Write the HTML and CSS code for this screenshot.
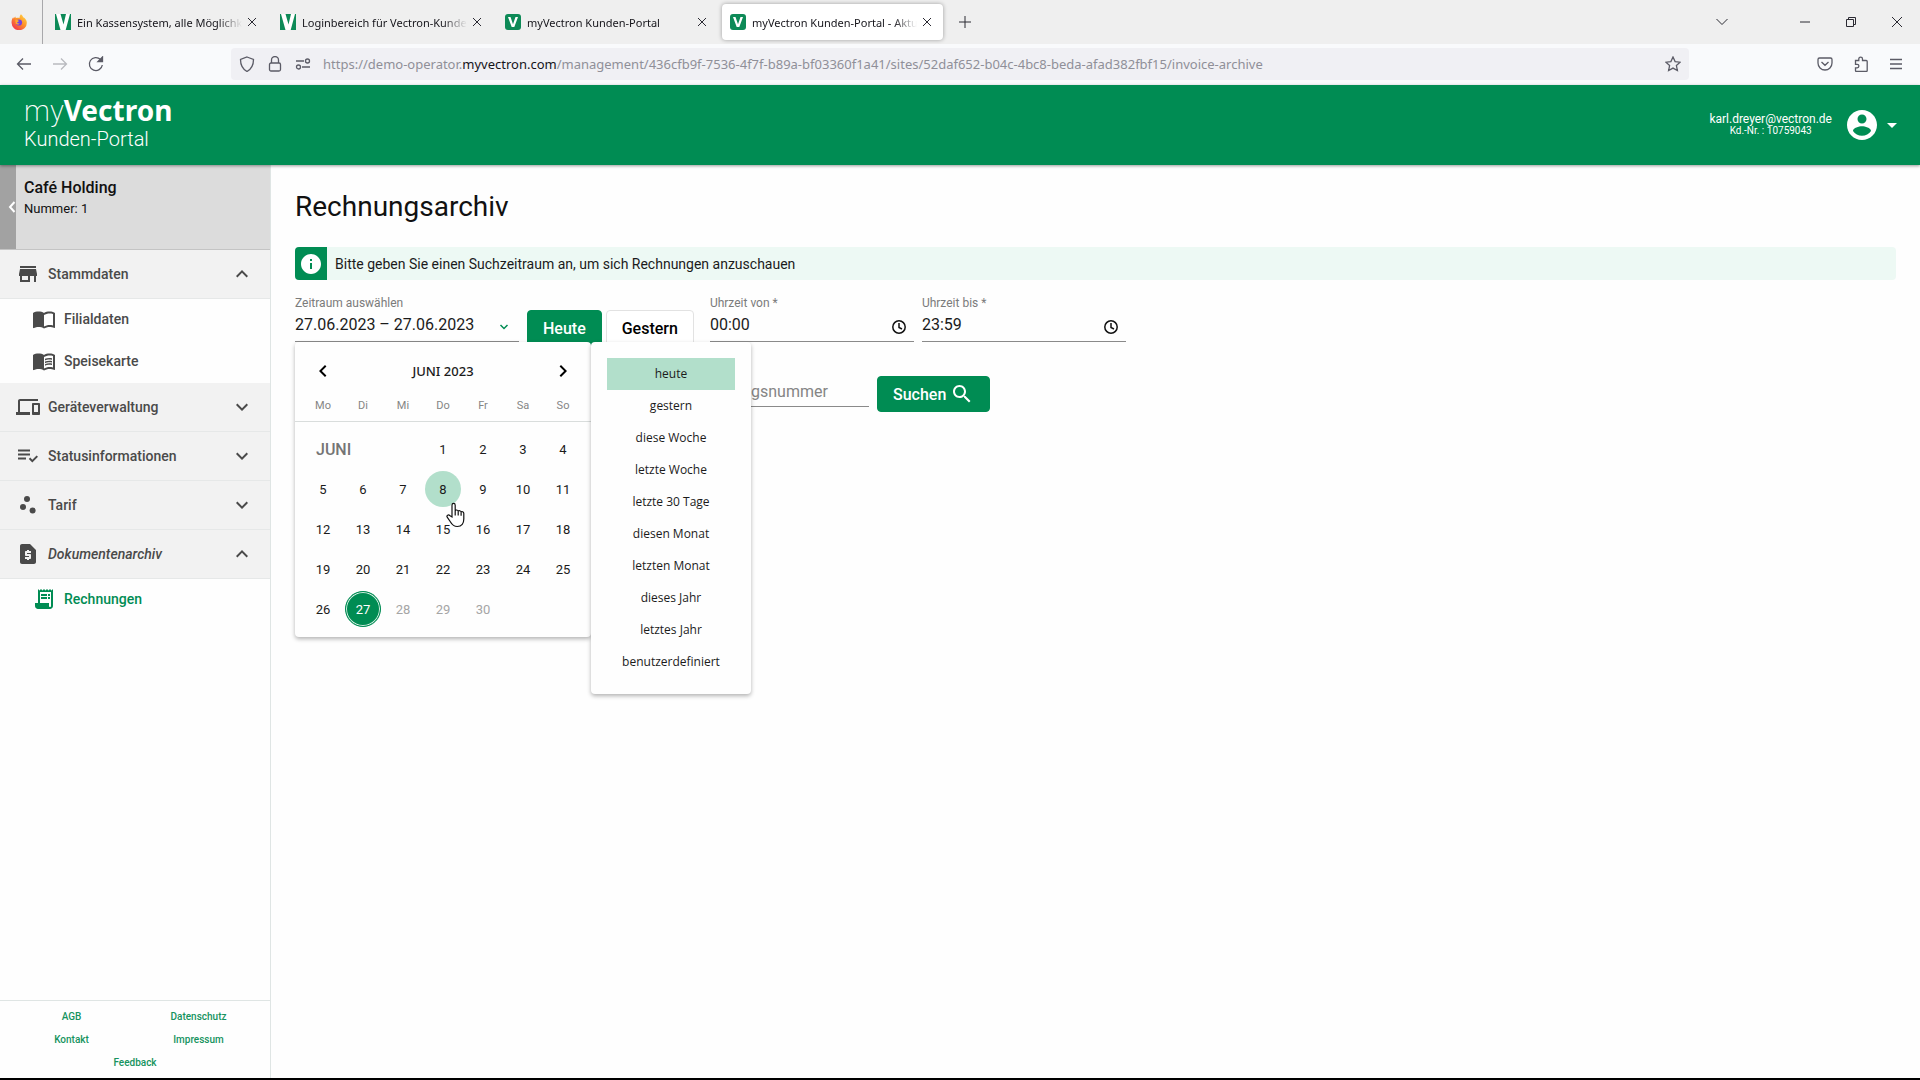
FILE: index.html
```html
<!DOCTYPE html>
<html lang="de">
<head>
    <meta charset="UTF-8">
    <meta name="viewport" content="width=device-width, initial-scale=1.0">
    <title>myVectron Kunden-Portal</title>
    <link rel="stylesheet" href="styles.css">
</head>
<body>
    <!-- Browser tabs -->
    <div class="tab-bar">
        <button class="pinned-tab" type="button" aria-label="Firefox">
            <svg width="16" height="16" viewBox="0 0 16 16">
                <defs>
                    <linearGradient id="flame" x1="1" y1="0" x2="0.2" y2="1">
                        <stop offset="0" stop-color="#ffe34a"/>
                        <stop offset="0.5" stop-color="#ff9128"/>
                        <stop offset="1" stop-color="#f0304f"/>
                    </linearGradient>
                </defs>
                <path fill="url(#flame)" d="M10 .3c1.200 1 1.900 1.900 2.200 2.900 1 .3 3.600 2.200 3.600 5.500a7.500 7.200 0 0 1-15.200.4C.4 6.700 1 4.600 2.200 3.200l.5 1.300 1.500-1.900.7 1.600c1.100-.6 3-.2 3.600-.2C8.600 2.600 9 1.200 10 .3z"/>
                <circle cx="8" cy="8.500" r="3.100" fill="#7542e0"/>
                <path fill="#ffab2e" d="M4.300 6c1.800-.5 3 .2 3.600 1.200L6 8.500c.5 1 1.600 1.200 2.700.8-.6 1.600-3 1.700-4 .2z"/>
            </svg>
        </button>
        <div class="tab">
            <svg class="favicon" width="16" height="16" viewBox="0 0 16 16"><path fill="#0d8a57" d="M0 0h16v16H0z"/><path fill="#fff" d="M1 0h4.500l3 10.500L11 0h4L10.700 16H5.500z"/></svg>
            <span class="tab-title">Ein Kassensystem, alle Möglichkeiten</span>
            <button class="tab-close" type="button" aria-label="Tab schließen"><svg width="10" height="10" viewBox="0 0 10 10"><path d="M1 1l8 8M9 1l-8 8"/></svg></button>
        </div>
        <div class="tab">
            <svg class="favicon" width="16" height="16" viewBox="0 0 16 16"><path fill="#0d8a57" d="M0 0h16v16H0z"/><path fill="#fff" d="M1 0h4.500l3 10.500L11 0h4L10.700 16H5.500z"/></svg>
            <span class="tab-title">Loginbereich für Vectron-Kunden</span>
            <button class="tab-close" type="button" aria-label="Tab schließen"><svg width="10" height="10" viewBox="0 0 10 10"><path d="M1 1l8 8M9 1l-8 8"/></svg></button>
        </div>
        <div class="tab">
            <svg class="favicon" width="16" height="16" viewBox="0 0 16 16"><rect width="16" height="16" rx="3" fill="#0d8a57"/><path fill="#fff" d="M3 3h2.500L8 10.200 10.500 3H13L9.300 13H6.700z"/></svg>
            <span class="tab-title">myVectron Kunden-Portal</span>
            <button class="tab-close" type="button" aria-label="Tab schließen"><svg width="10" height="10" viewBox="0 0 10 10"><path d="M1 1l8 8M9 1l-8 8"/></svg></button>
        </div>
        <div class="tab active">
            <svg class="favicon" width="16" height="16" viewBox="0 0 16 16"><rect width="16" height="16" rx="3" fill="#0d8a57"/><path fill="#fff" d="M3 3h2.500L8 10.200 10.500 3H13L9.300 13H6.700z"/></svg>
            <span class="tab-title">myVectron Kunden-Portal - Aktuell</span>
            <button class="tab-close" type="button" aria-label="Tab schließen"><svg width="10" height="10" viewBox="0 0 10 10"><path d="M1 1l8 8M9 1l-8 8"/></svg></button>
        </div>
        <button class="new-tab" type="button" aria-label="Neuer Tab"><svg width="12" height="12" viewBox="0 0 12 12"><path d="M6 0v12M0 6h12"/></svg></button>
        <div class="window-buttons">
            <button type="button" aria-label="Alle Tabs"><svg width="12" height="12" viewBox="0 0 12 12"><path d="M.5 3L6 8.500 11.500 3"/></svg></button>
            <button type="button" aria-label="Minimieren"><svg width="10" height="10" viewBox="0 0 10 10"><path d="M0 5h10"/></svg></button>
            <button type="button" aria-label="Verkleinern"><svg width="10" height="10" viewBox="0 0 10 10"><path d="M.5 2.500h7v7h-7zM2.500 2.500v-2h7v7h-2"/></svg></button>
            <button type="button" aria-label="Schließen"><svg width="10" height="10" viewBox="0 0 10 10"><path d="M0 0l10 10M10 0L0 10"/></svg></button>
        </div>
    </div>

    <!-- Address bar -->
    <div class="nav-bar">
        <div class="nav-buttons">
            <button type="button" aria-label="Zurück"><svg width="16" height="16" viewBox="0 0 16 16"><path d="M15 8H1.500M7 2.500L1.500 8 7 13.500"/></svg></button>
            <button type="button" aria-label="Vor" disabled><svg width="16" height="16" viewBox="0 0 16 16"><path d="M1 8h13.500M9 2.500L14.500 8 9 13.500"/></svg></button>
            <button type="button" aria-label="Neu laden"><svg width="16" height="16" viewBox="0 0 16 16"><path d="M14.300 9A6.500 6.500 0 1 1 12.500 3.500L14 5"/><path d="M14.500 1v4.500H10z" fill="#5b5b66"/></svg></button>
        </div>
        <div class="url-bar">
            <svg width="16" height="16" viewBox="0 0 16 16"><path d="M8 1l6.500 2.500c0 5.500-2 9.500-6.500 12-4.500-2.500-6.500-6.500-6.500-12z"/></svg>
            <svg width="16" height="16" viewBox="0 0 16 16"><rect x="2.500" y="7" width="11" height="8" rx="1.500"/><path d="M4.500 7V4a3.500 3.500 0 0 1 7 0v3"/></svg>
            <svg width="16" height="16" viewBox="0 0 16 16"><path d="M1 5h8M7 11h8"/><circle cx="12.500" cy="5" r="2"/><circle cx="3.500" cy="11" r="2"/></svg>
            <span class="url">https://demo-operator.<b>myvectron.com</b>/management/436cfb9f-7536-4f7f-b89a-bf03360f1a41/sites/52daf652-b04c-4bc8-beda-afad382fbf15/invoice-archive</span>
            <svg width="16" height="16" viewBox="0 0 16 16"><path d="M8 1l2.100 4.600 5 .6-3.700 3.400 1 5L8 12.100l-4.400 2.500 1-5L.9 6.200l5-.6z"/></svg>
        </div>
        <div class="tool-buttons">
            <button type="button" aria-label="Pocket"><svg width="16" height="16" viewBox="0 0 16 16"><path d="M2.500 2h11a1.500 1.500 0 0 1 1.500 1.500V7A7 7 0 0 1 1 7V3.500A1.500 1.500 0 0 1 2.500 2zM4.500 6L8 9.300 11.500 6"/></svg></button>
            <button type="button" aria-label="Erweiterungen"><svg width="16" height="16" viewBox="0 0 16 16"><path d="M2.500 4.500h3.300V3a1.800 1.800 0 0 1 3.700 0v1.500h3.700a1 1 0 0 1 1 1v9a1 1 0 0 1-1 1h-9.700a1 1 0 0 1-1-1v-2.700h1.700a1.600 1.600 0 0 0 0-3.400H2.500z"/></svg></button>
            <button type="button" aria-label="Menü"><svg width="14" height="14" viewBox="0 0 14 14"><path d="M1 2.500h12M1 7h12M1 11.500h12"/></svg></button>
        </div>
    </div>

    <header class="page-header">
        <div class="logo">
            <div class="logo-name">my<b>Vectron</b></div>
            <div class="logo-sub">Kunden-Portal</div>
        </div>
        <div class="account">
            <div class="account-text">
                <div class="mail">karl.dreyer@vectron.de</div>
                <div class="customer">Kd.-Nr. : 10759043</div>
            </div>
            <button class="account-button" type="button" aria-label="Konto">
                <svg width="36" height="36" viewBox="0 0 24 24"><path d="M12 2C6.480 2 2 6.480 2 12s4.480 10 10 10 10-4.480 10-10S17.520 2 12 2zm0 3c1.660 0 3 1.340 3 3s-1.340 3-3 3-3-1.340-3-3 1.340-3 3-3zm0 14.200c-2.500 0-4.710-1.280-6-3.220.03-1.990 4-3.080 6-3.080 1.990 0 5.970 1.090 6 3.080-1.290 1.940-3.500 3.220-6 3.220z"/></svg>
                <svg width="24" height="24" viewBox="0 0 24 24"><path d="M7 10l5 5 5-5z"/></svg>
            </button>
        </div>
    </header>

    <div class="content">
        <!-- Sidebar -->
        <aside class="sidebar">
            <div class="site">
                <button class="site-back" type="button" aria-label="Zurück"><svg width="8" height="12" viewBox="0 0 8 12"><path d="M6.500 1L2 6l4.500 5"/></svg></button>
                <div class="site-text">
                    <div class="site-name">Café Holding</div>
                    <div class="site-number">Nummer: 1</div>
                </div>
            </div>
            <nav class="menu">
                <button class="menu-item" type="button">
                    <svg class="icon" viewBox="0 0 24 24"><path d="M20 4H4v2h16V4zm1 10v-2l-1-5H4l-1 5v2h1v6h10v-6h4v6h2v-6h1zm-9 4H6v-4h6v4z"/></svg>
                    <span>Stammdaten</span>
                    <svg class="icon" viewBox="0 0 24 24"><path d="M12 8l-6 6 1.410 1.410L12 10.830l4.590 4.580L18 14z"/></svg>
                </button>
                <div class="submenu">
                    <a href="#"><svg class="icon" viewBox="0 0 24 24"><path d="M21 5c-1.110-.35-2.330-.5-3.500-.5-1.950 0-4.050.4-5.500 1.500-1.450-1.100-3.550-1.500-5.500-1.500S2.450 4.900 1 6v14.650c0 .25.25.5.5.5.1 0 .15-.05.25-.05C3.100 20.450 5.050 20 6.500 20c1.950 0 4.050.4 5.500 1.500 1.350-.85 3.800-1.500 5.500-1.500 1.650 0 3.350.3 4.750 1.050.1.050.15.050.25.050.25 0 .5-.25.5-.5V6c-.6-.45-1.250-.75-2-1zm0 13.500c-1.100-.35-2.300-.5-3.500-.5-1.700 0-4.150.65-5.500 1.500V8c1.350-.85 3.800-1.500 5.500-1.500 1.200 0 2.400.15 3.500.5v11.500z"/></svg>Filialdaten</a>
                    <a href="#"><svg class="icon" viewBox="0 0 24 24"><path d="M21 5c-1.110-.35-2.330-.5-3.500-.5-1.950 0-4.050.4-5.500 1.500-1.450-1.100-3.550-1.500-5.500-1.500S2.450 4.900 1 6v14.650c0 .25.25.5.5.5.1 0 .15-.05.25-.05C3.100 20.450 5.050 20 6.500 20c1.950 0 4.050.4 5.500 1.500 1.350-.85 3.800-1.500 5.500-1.500 1.650 0 3.350.3 4.750 1.050.1.050.15.050.25.050.25 0 .5-.25.5-.5V6c-.6-.45-1.250-.75-2-1zm0 13.500c-1.100-.35-2.300-.5-3.500-.5-1.700 0-4.150.65-5.500 1.500V8c1.350-.85 3.800-1.500 5.500-1.500 1.200 0 2.400.15 3.500.5v11.500z"/><path d="M17.500 10.500c.88 0 1.730.09 2.500.26V9.240c-.79-.15-1.640-.24-2.500-.24-1.700 0-3.240.29-4.500.83v1.660c1.130-.64 2.700-.99 4.500-.99zM13 12.490v1.660c1.130-.64 2.700-.99 4.500-.99.88 0 1.730.09 2.500.26V11.900c-.79-.15-1.640-.24-2.500-.24-1.700 0-3.240.3-4.500.83zM17.500 14.330c-1.700 0-3.240.29-4.500.83v1.660c1.130-.64 2.700-.99 4.500-.99.88 0 1.730.09 2.500.26v-1.520c-.79-.16-1.640-.24-2.500-.24z"/></svg>Speisekarte</a>
                </div>
                <button class="menu-item" type="button">
                    <svg class="icon" viewBox="0 0 24 24"><path d="M4 6h18V4H4c-1.100 0-2 .9-2 2v11H0v3h14v-3H4V6zm19 2h-6c-.55 0-1 .45-1 1v10c0 .55.45 1 1 1h6c.55 0 1-.45 1-1V9c0-.55-.45-1-1-1zm-1 9h-4v-7h4v7z"/></svg>
                    <span>Geräteverwaltung</span>
                    <svg class="icon" viewBox="0 0 24 24"><path d="M16.590 8.590L12 13.170 7.410 8.590 6 10l6 6 6-6z"/></svg>
                </button>
                <button class="menu-item" type="button">
                    <svg class="icon" viewBox="0 0 24 24"><path d="M2 9.500h12v2H2zm0-4h12v2H2zm0 8h8v2H2zm18.590-2.070l-4.250 4.240-2.120-2.120-1.410 1.410L16.340 18.500 22 12.840z"/></svg>
                    <span>Statusinformationen</span>
                    <svg class="icon" viewBox="0 0 24 24"><path d="M16.590 8.590L12 13.170 7.410 8.590 6 10l6 6 6-6z"/></svg>
                </button>
                <button class="menu-item" type="button">
                    <svg class="icon" viewBox="0 0 24 24"><circle cx="7" cy="14" r="3"/><circle cx="11" cy="6" r="3"/><circle cx="16.600" cy="17.600" r="3"/></svg>
                    <span>Tarif</span>
                    <svg class="icon" viewBox="0 0 24 24"><path d="M16.590 8.590L12 13.170 7.410 8.590 6 10l6 6 6-6z"/></svg>
                </button>
                <button class="menu-item current" type="button">
                    <svg class="icon" viewBox="0 0 24 24"><path d="M14 2H6c-1.100 0-1.990.9-1.990 2L4 20c0 1.100.89 2 1.990 2H18c1.100 0 2-.9 2-2V8l-6-6zm1 9h-4v1h3c.55 0 1 .45 1 1v3c0 .55-.45 1-1 1h-1v1h-2v-1H9v-2h4v-1h-3c-.55 0-1-.45-1-1v-3c0-.55.45-1 1-1h1V8h2v1h2v2z"/></svg>
                    <span>Dokumentenarchiv</span>
                    <svg class="icon" viewBox="0 0 24 24"><path d="M12 8l-6 6 1.410 1.410L12 10.830l4.590 4.580L18 14z"/></svg>
                </button>
                <div class="submenu">
                    <a class="selected" href="#"><svg class="icon" viewBox="0 0 24 24"><path d="M19.500 3.500L18 2l-1.500 1.500L15 2l-1.500 1.500L12 2l-1.500 1.500L9 2 7.500 3.500 6 2v14H3v3c0 1.660 1.340 3 3 3h12c1.660 0 3-1.340 3-3V2l-1.500 1.500zM19 19c0 .55-.45 1-1 1s-1-.45-1-1v-3H8V5h11v14z"/><path d="M9 7h6v2H9zM16 7h2v2h-2zM9 10h6v2H9zM16 10h2v2h-2z"/></svg>Rechnungen</a>
                </div>
            </nav>
            <footer class="links">
                <a href="#">AGB</a>
                <a href="#">Datenschutz</a>
                <a href="#">Kontakt</a>
                <a href="#">Impressum</a>
                <a class="wide" href="#">Feedback</a>
            </footer>
        </aside>

        <main class="main">
            <h1>Rechnungsarchiv</h1>
            <div class="info">
                <span class="info-icon"><svg width="24" height="24" viewBox="0 0 24 24"><path d="M12 2C6.480 2 2 6.480 2 12s4.480 10 10 10 10-4.480 10-10S17.520 2 12 2zm1 15h-2v-6h2v6zm0-8h-2V7h2v2z"/></svg></span>
                <span>Bitte geben Sie einen Suchzeitraum an, um sich Rechnungen anzuschauen</span>
            </div>

            <form>
                <div class="form-row">
                    <div class="field range">
                        <label for="range">Zeitraum auswählen</label>
                        <div class="field-box">
                            <input type="text" id="range" value="27.06.2023 – 27.06.2023" readonly>
                            <svg class="range-arrow" width="10" height="10" viewBox="0 0 10 10"><path d="M1.500 3L5 6.500 8.500 3"/></svg>
                        </div>

                        <!-- Date picker -->
                        <div class="picker">
                            <div class="calendar">
                                <div class="calendar-head">
                                    <button type="button" aria-label="Voriger Monat"><svg width="24" height="24" viewBox="0 0 24 24"><path d="M15.410 7.410L14 6l-6 6 6 6 1.410-1.410L10.830 12z"/></svg></button>
                                    <span>JUNI 2023</span>
                                    <button type="button" aria-label="Nächster Monat"><svg width="24" height="24" viewBox="0 0 24 24"><path d="M10 6L8.590 7.410 13.170 12l-4.580 4.590L10 18l6-6z"/></svg></button>
                                </div>
                                <table>
                                    <thead>
                                        <tr><th>Mo</th><th>Di</th><th>Mi</th><th>Do</th><th>Fr</th><th>Sa</th><th>So</th></tr>
                                    </thead>
                                    <tbody>
                                        <tr><td class="month" colspan="3">JUNI</td><td><button type="button">1</button></td><td><button type="button">2</button></td><td><button type="button">3</button></td><td><button type="button">4</button></td></tr>
                                        <tr><td><button type="button">5</button></td><td><button type="button">6</button></td><td><button type="button">7</button></td><td class="pointed"><button class="hovered" type="button">8</button><svg class="hand" width="20" height="26" viewBox="0 0 20 26"><path d="M7 15V3.200C7 .8 10.200.8 10.200 3.200V9c.3-1.500 3-1.300 3 .5.4-1.300 2.900-1 2.900.7.5-1 2.700-.6 2.700 1.300v5.500c0 4.500-2 7.500-6.500 7.500-4 0-5.300-1.800-6.800-4.500l-3.300-4.800c-1-1.700 1.300-2.900 2.500-1.700z"/><path d="M10.200 9v4.500M13.200 9.500v4M16.100 10.300v3.500"/></svg></td><td><button type="button">9</button></td><td><button type="button">10</button></td><td><button type="button">11</button></td></tr>
                                        <tr><td><button type="button">12</button></td><td><button type="button">13</button></td><td><button type="button">14</button></td><td><button type="button">15</button></td><td><button type="button">16</button></td><td><button type="button">17</button></td><td><button type="button">18</button></td></tr>
                                        <tr><td><button type="button">19</button></td><td><button type="button">20</button></td><td><button type="button">21</button></td><td><button type="button">22</button></td><td><button type="button">23</button></td><td><button type="button">24</button></td><td><button type="button">25</button></td></tr>
                                        <tr><td><button type="button">26</button></td><td><button class="chosen" type="button">27</button></td><td><button type="button" disabled>28</button></td><td><button type="button" disabled>29</button></td><td><button type="button" disabled>30</button></td><td></td><td></td></tr>
                                    </tbody>
                                </table>
                            </div>
                            <div class="presets">
                                <button class="active" type="button">heute</button>
                                <button type="button">gestern</button>
                                <button type="button">diese Woche</button>
                                <button type="button">letzte Woche</button>
                                <button type="button">letzte 30 Tage</button>
                                <button type="button">diesen Monat</button>
                                <button type="button">letzten Monat</button>
                                <button type="button">dieses Jahr</button>
                                <button type="button">letztes Jahr</button>
                                <button type="button">benutzerdefiniert</button>
                            </div>
                        </div>
                    </div>
                    <div class="day-buttons">
                        <button class="btn btn-green" type="button">Heute</button>
                        <button class="btn btn-white" type="button">Gestern</button>
                    </div>
                    <div class="field time">
                        <label for="from">Uhrzeit von *</label>
                        <div class="field-box">
                            <input type="text" id="from" value="00:00" required>
                            <svg class="clock" width="16" height="16" viewBox="0 0 16 16"><circle cx="8" cy="8" r="6.200"/><path d="M8 4v4.500l3 1.500"/></svg>
                        </div>
                    </div>
                    <div class="field time">
                        <label for="until">Uhrzeit bis *</label>
                        <div class="field-box">
                            <input type="text" id="until" value="23:59" required>
                            <svg class="clock" width="16" height="16" viewBox="0 0 16 16"><circle cx="8" cy="8" r="6.200"/><path d="M8 4v4.500l3 1.500"/></svg>
                        </div>
                    </div>
                </div>
                <div class="form-row search-row">
                    <div class="field number">
                        <div class="field-box">
                            <input type="text" id="number" placeholder="Rechnungsnummer" aria-label="Rechnungsnummer">
                        </div>
                    </div>
                    <button class="btn btn-green" type="submit">Suchen <svg width="24" height="24" viewBox="0 0 24 24"><path d="M15.500 14h-.79l-.28-.27C15.410 12.590 16 11.110 16 9.500 16 5.910 13.090 3 9.500 3S3 5.910 3 9.500 5.910 16 9.500 16c1.610 0 3.090-.59 4.230-1.570l.27.28v.79l5 4.990L20.490 19l-4.990-5zm-6 0C7.010 14 5 11.990 5 9.500S7.010 5 9.500 5 14 7.010 14 9.500 11.990 14 9.500 14z"/></svg></button>
                </div>
            </form>
        </main>
    </div>
</body>
</html>
```
FILE: styles.css
```css
* {
    box-sizing: border-box;
}

body {
    display: flex;
    flex-direction: column;
    min-height: 100vh;
    margin: 0;
    border-bottom: 2px solid #000;
    background-color: #fefefe;
    color: #1b1b1b;
    font-family: Roboto, sans-serif;
    font-size: 14px;
}

button {
    margin: 0;
    padding: 0;
    border: none;
    background: none;
    color: inherit;
    font: inherit;
    cursor: pointer;
}

a {
    text-decoration: none;
}

svg {
    display: block;
    flex-shrink: 0;
}

/* Browser tabs */
.tab-bar {
    display: flex;
    height: 44px;
    background-color: #efefef;
    font-family: "Noto Sans", sans-serif;
    font-size: 11px;
}

.tab-bar button svg {
    fill: none;
    stroke: #2b2a33;
}

.pinned-tab {
    display: flex;
    align-items: center;
    justify-content: center;
    width: 43px;
    padding: 0 5px 0 0;
    border-right: 1px solid #a8a8ab;
}

.tab-bar .pinned-tab svg {
    stroke: none;
}

.tab {
    display: flex;
    align-items: center;
    width: 221px;
    margin: 4px 2px;
    padding: 0 6px 0 8px;
    border-radius: 4px;
}

.tab.active {
    background-color: #fff;
    box-shadow: 0 0 4px rgba(0, 0, 0, 0.35);
}

.pinned-tab + .tab {
    margin-left: 4px;
}

.tab-title {
    flex: 1;
    overflow: hidden;
    margin-left: 6px;
    color: #15141a;
    white-space: nowrap;
    mask-image: linear-gradient(to left, transparent, #000 24px);
}

.tab-close {
    padding: 5px;
}

.new-tab {
    padding: 0 14px;
}

.window-buttons {
    display: flex;
    align-items: center;
    margin-left: auto;
}

.window-buttons button {
    display: flex;
    justify-content: center;
    width: 46px;
}

.window-buttons button:first-child {
    margin-right: 37px;
}

/* Address bar */
.nav-bar {
    display: flex;
    align-items: center;
    height: 41px;
    padding-bottom: 1px;
    background-color: #f9fafc;
}

.nav-bar svg {
    fill: none;
    stroke: #5b5b66;
    stroke-width: 1.3;
}

.nav-buttons {
    display: flex;
    gap: 20px;
    width: 231px;
    padding-left: 16px;
}

.nav-buttons button:disabled {
    opacity: 0.4;
}

.url-bar {
    display: flex;
    flex: 1;
    align-items: center;
    gap: 12px;
    min-width: 0;
    height: 32px;
    padding: 0 8px;
    border-radius: 4px;
    background-color: #f0f0f4;
}

.url {
    flex: 1;
    overflow: hidden;
    color: #8f8f98;
    font-family: "Noto Sans", sans-serif;
    font-size: 13px;
    white-space: nowrap;
}

.url b {
    color: #15141a;
    font-weight: normal;
}

.tool-buttons {
    display: flex;
    align-items: center;
    justify-content: flex-end;
    gap: 20px;
    width: 231px;
    padding-right: 17px;
}

/* Page header */
.page-header {
    display: flex;
    align-items: center;
    justify-content: space-between;
    height: 80px;
    padding: 0 16px 0 24px;
    background-color: #008c53;
    box-shadow: 0 1px 3px rgba(0, 0, 0, 0.4);
    color: #fff;
    z-index: 1;
}

.logo {
    padding-bottom: 5px;
}

.logo-name {
    font-size: 29px;
    font-weight: 200;
    line-height: 32px;
}

.logo-name b {
    font-family: "Noto Sans", sans-serif;
    font-size: 28px;
    font-weight: bold;
}

.logo-sub {
    font-size: 20px;
    font-weight: 300;
    line-height: 24px;
}

.account {
    display: flex;
    align-items: center;
    gap: 12px;
}

.mail {
    font-size: 12px;
    line-height: 12px;
}

.customer {
    font-size: 10px;
    line-height: 12px;
    text-align: center;
}

.account-button {
    display: flex;
    align-items: center;
}

.account-button svg {
    fill: #fff;
}

.content {
    display: flex;
    flex: 1;
}

/* Sidebar */
.sidebar {
    display: flex;
    flex-direction: column;
    width: 271px;
    border-right: 1px solid #dfe5e4;
}

.site {
    display: flex;
    height: 85px;
    border-bottom: 1px solid #c4c4c4;
    background-color: #dcdcdc;
}

.site-back {
    display: flex;
    align-items: center;
    justify-content: flex-end;
    width: 16px;
    background-color: #a2a2a2;
}

.site-back svg {
    fill: none;
    stroke: #fff;
    stroke-width: 2;
}

.site-text {
    padding: 13px 8px;
    color: #111;
}

.site-name {
    font-size: 16px;
    font-weight: 500;
    line-height: 20px;
}

.site-number {
    font-size: 13px;
    line-height: 22px;
}

.icon {
    width: 24px;
    height: 24px;
    fill: currentColor;
}

.menu {
    color: #4a4a4a;
    font-weight: 500;
}

.menu-item {
    display: flex;
    align-items: center;
    gap: 8px;
    width: 100%;
    height: 49px;
    padding: 0 16px;
    border-bottom: 1px solid #e6e8e8;
    background-color: #f2f2f2;
    text-align: left;
}

.menu-item span {
    flex: 1;
}

.menu-item.current {
    font-style: italic;
}

.submenu a {
    display: flex;
    align-items: center;
    gap: 8px;
    height: 42px;
    padding: 0 0 2px 32px;
    color: inherit;
}

.submenu .selected {
    color: #008c53;
}

.links {
    display: grid;
    grid-template-columns: 1fr 1fr;
    margin-top: auto;
    padding: 4px 8px;
    border-top: 1px solid #dfe5e4;
    font-size: 10px;
    font-weight: 500;
    line-height: 23px;
    text-align: center;
}

.links a {
    color: #16935f;
}

.links .wide {
    grid-column: span 2;
}

/* Main area */
.main {
    flex: 1;
    padding: 25px 24px;
}

h1 {
    margin: 0 0 23px;
    font-size: 28px;
    font-weight: normal;
    line-height: 34px;
    color: #111;
}

.info {
    display: flex;
    align-items: center;
    gap: 8px;
    height: 33px;
    margin-bottom: 14px;
    border-radius: 4px;
    background-color: #edf9f4;
}

.info-icon {
    display: flex;
    align-items: center;
    justify-content: center;
    width: 32px;
    height: 33px;
    border-radius: 4px 0 0 4px;
    background-color: #008c53;
}

.info-icon svg {
    fill: #fff;
}

.form-row {
    display: flex;
    align-items: flex-start;
    gap: 8px;
}

.field {
    position: relative;
}

.field label {
    display: block;
    color: #7b7b7b;
    font-size: 12px;
    line-height: 18px;
}

.field-box {
    display: flex;
    align-items: center;
    height: 30px;
    padding-bottom: 4px;
    border-bottom: 1px solid #8a8a8a;
}

.field input {
    flex: 1;
    min-width: 0;
    padding: 0;
    border: none;
    outline: none;
    background: none;
    color: #1b1b1b;
    font-family: Roboto, sans-serif;
    font-size: 16px;
}

.field input::placeholder {
    color: #858585;
}

.range {
    width: 224px;
}

.range-arrow {
    margin: 4px 10px 0 0;
    fill: none;
    stroke: #008c53;
    stroke-width: 1.5;
}

.time {
    width: 204px;
}

.clock {
    margin: 4px 7px 0 0;
    fill: none;
    stroke: #111;
    stroke-width: 1.5;
}

.day-buttons {
    display: flex;
    gap: 4px;
    margin: 16px 8px 0 0;
}

.btn {
    display: flex;
    align-items: center;
    gap: 4px;
    height: 36px;
    padding: 0 15px;
    border: 1px solid #e2e2e2;
    border-radius: 4px;
    font-size: 16px;
    font-weight: 500;
}

.btn-green {
    border-color: #008c53;
    background-color: #008c53;
    color: #fff;
}

.btn-green svg {
    fill: #fff;
}

.btn-white {
    background-color: #fff;
    color: #000;
}

.search-row {
    margin-top: 30px;
    padding-left: 394px;
}

.number {
    width: 180px;
}

.number .field-box {
    height: 31px;
    padding-bottom: 0;
}

/* Date picker */
.picker {
    position: absolute;
    top: 48px;
    left: 0;
    display: flex;
    align-items: flex-start;
    z-index: 2;
}

.calendar,
.presets {
    border-radius: 4px;
    background-color: #fefefe;
    box-shadow: 0 2px 4px rgba(0, 0, 0, 0.3);
}

.calendar {
    width: 296px;
    padding-bottom: 8px;
}

.calendar-head {
    display: flex;
    align-items: center;
    justify-content: space-between;
    height: 50px;
    padding: 8px 16px 0;
    font-family: "Noto Sans", sans-serif;
    font-size: 13px;
    font-weight: 500;
}

.calendar table {
    width: 100%;
    border-collapse: collapse;
    table-layout: fixed;
}

.calendar thead {
    border-bottom: 1px solid #d9dddc;
}

.calendar th {
    height: 29px;
    padding: 0 0 2px;
    color: #858585;
    font-size: 11px;
    font-weight: normal;
}

.calendar td {
    height: 40px;
    padding: 0;
    text-align: center;
}

.calendar tbody tr:first-child td {
    height: 48px;
    padding-top: 8px;
}

/* the seven 40px columns sit inside 8px side margins */
.calendar th:first-child,
.calendar td:first-child {
    padding-left: 8px;
}

.calendar th:last-child,
.calendar td:last-child {
    padding-right: 8px;
}

.calendar th:first-child,
.calendar th:last-child {
    width: 48px;
}

.calendar td.month {
    padding-left: 21px;
    color: #757575;
    font-size: 16px;
    font-weight: 500;
    text-align: left;
}

.calendar td button {
    width: 36px;
    height: 36px;
    border-radius: 50%;
    font-size: 13px;
}

.calendar td button:disabled {
    color: #a5a5a5;
}

.calendar td .hovered {
    background-color: #b2dfcb;
}

.calendar td .chosen {
    border: 1px solid #008c53;
    background-color: #008c53;
    box-shadow: inset 0 0 0 1px #d5efe3;
    color: #fff;
}

.pointed {
    position: relative;
}

.hand {
    position: absolute;
    top: 33px;
    left: 22px;
    fill: #fff;
    stroke: #111;
    stroke-width: 1.2;
    z-index: 1;
}

.presets {
    display: flex;
    flex-direction: column;
    width: 160px;
    padding: 16px;
    font-family: "Open Sans", sans-serif;
    font-size: 12px;
}

.presets button {
    height: 32px;
    padding-bottom: 2px;
}

.presets .active {
    background-color: #b2dfcb;
}
```
